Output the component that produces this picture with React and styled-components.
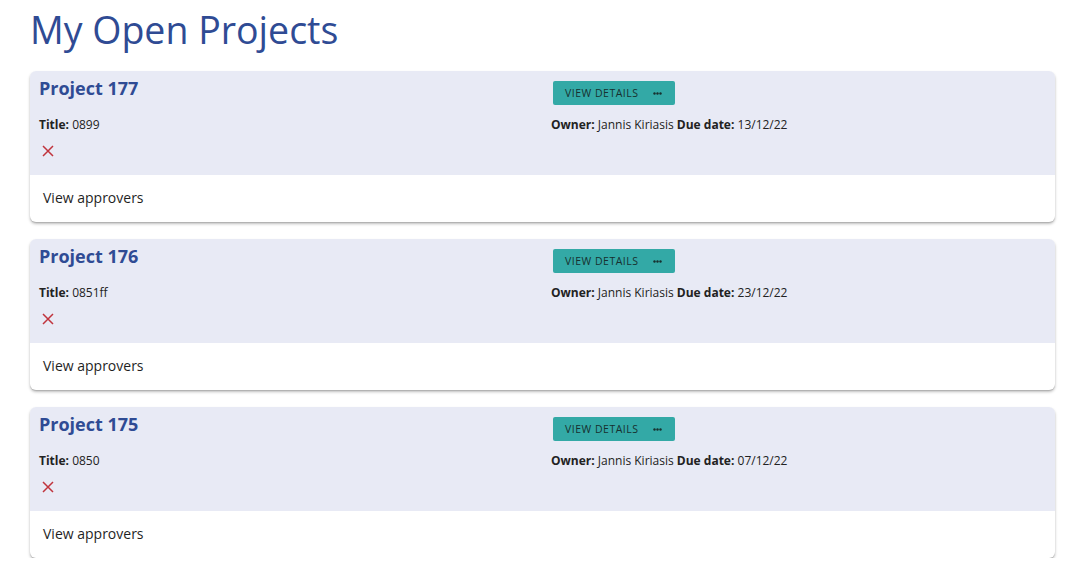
import React from "react";
import styled, { createGlobalStyle } from "styled-components";

const projects = [
  { id: 177, title: "0899", owner: "Jannis Kiriasis", due: "13/12/22" },
  { id: 176, title: "0851ff", owner: "Jannis Kiriasis", due: "23/12/22" },
  { id: 175, title: "0850", owner: "Jannis Kiriasis", due: "07/12/22" },
];

const GlobalStyle = createGlobalStyle`
  body {
    margin: 0;
    background: #ffffff;
    font-family: "Open Sans", "Noto Sans", sans-serif;
    color: #1f1f1f;
  }
`;

const Page = styled.main`
  padding: 0 14px 0 30px;
`;

const Heading = styled.h1`
  margin: 7px 0 18px;
  font-size: 37.5px;
  line-height: 46px;
  font-weight: 400;
  color: #2f4b94;
`;

const List = styled.div`
  display: flex;
  flex-direction: column;
  gap: 17px;
`;

const Card = styled.section`
  border-radius: 6px;
  overflow: hidden;
  background: #ffffff;
  box-shadow: 0 2px 3px rgba(0, 0, 0, 0.25), 0 1px 1px rgba(0, 0, 0, 0.12);
`;

const Header = styled.div`
  display: grid;
  grid-template-columns: 512px 1fr;
  row-gap: 11px;
  align-items: start;
  padding: 5px 9px 18px;
  background: #e8eaf5;
`;

const Name = styled.h2`
  margin: 0;
  font-size: 18px;
  line-height: 24px;
  font-weight: 700;
  color: #2f4b94;
`;

const Button = styled.button`
  justify-self: start;
  display: flex;
  align-items: center;
  gap: 14px;
  height: 24px;
  margin: 5px 0 0 2px;
  padding: 0 13px 0 12px;
  border: none;
  border-radius: 2px;
  background: #33a9a6;
  color: #17302f;
  font-family: inherit;
  font-size: 10.5px;
  letter-spacing: 0.5px;
  text-transform: uppercase;
  cursor: pointer;
`;

const Line = styled.div`
  font-size: 12px;
  line-height: 18px;
  color: #222;

  b {
    font-weight: 700;
  }
`;

const Remove = styled.span`
  display: block;
  width: 12px;
  height: 12px;
  margin-left: 3px;
  line-height: 0;
`;

const Footer = styled.div`
  height: 47px;
  display: flex;
  align-items: center;
  padding: 0 13px 2px;
  box-sizing: border-box;
  font-size: 14px;
  color: #1f1f1f;
`;

const Dots = () => (
  <svg width="9" height="3" viewBox="0 0 9 3">
    <circle cx="1.5" cy="1.5" r="1.2" fill="#17302f" />
    <circle cx="4.5" cy="1.5" r="1.2" fill="#17302f" />
    <circle cx="7.5" cy="1.5" r="1.2" fill="#17302f" />
  </svg>
);

const Cross = () => (
  <svg width="12" height="12" viewBox="0 0 12 12">
    <path d="M1 1L11 11M11 1L1 11" stroke="#c0343d" strokeWidth="1.5" />
  </svg>
);

const ProjectCard = ({ project }) => (
  <Card>
    <Header>
      <Name>Project {project.id}</Name>
      <Button>
        View details
        <Dots />
      </Button>
      <Line>
        <b>Title:</b> {project.title}
      </Line>
      <Line>
        <b>Owner:</b> {project.owner} <b>Due date:</b> {project.due}
      </Line>
      <Remove>
        <Cross />
      </Remove>
    </Header>
    <Footer>View approvers</Footer>
  </Card>
);

export default function App() {
  return (
    <>
      <GlobalStyle />
      <Page>
        <Heading>My Open Projects</Heading>
        <List>
          {projects.map((p) => (
            <ProjectCard key={p.id} project={p} />
          ))}
        </List>
      </Page>
    </>
  );
}
